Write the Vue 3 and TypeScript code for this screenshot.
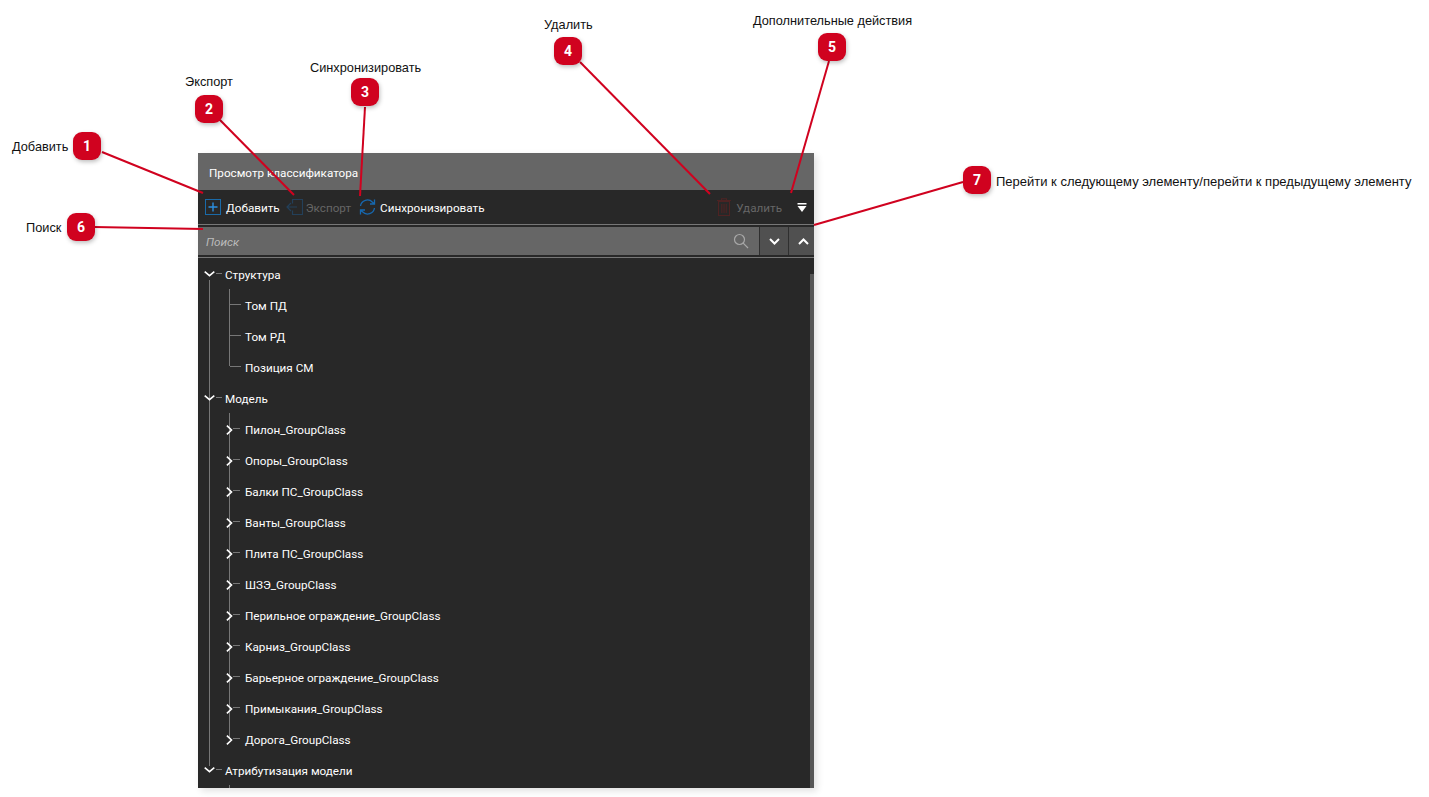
<script setup lang="ts">
interface Callout { n: number; x: number; y: number }
interface Row { label: string; level: number; kind: 'open' | 'closed' | 'leaf' }

const callouts: Callout[] = [
  { n: 1, x: 73, y: 132 },
  { n: 2, x: 195, y: 95 },
  { n: 3, x: 351, y: 78 },
  { n: 4, x: 554, y: 37 },
  { n: 5, x: 818, y: 33 },
  { n: 6, x: 67, y: 213 },
  { n: 7, x: 963, y: 166 },
]
const labels = [
  { t: 'Добавить', x: 12, y: 139, s: 12.75 },
  { t: 'Экспорт', x: 185, y: 74, s: 12.75 },
  { t: 'Синхронизировать', x: 310, y: 60, s: 12.75 },
  { t: 'Удалить', x: 544, y: 17, s: 12.75 },
  { t: 'Дополнительные действия', x: 753, y: 13, s: 12.75 },
  { t: 'Поиск', x: 26, y: 220, s: 12.75 },
  { t: 'Перейти к следующему элементу/перейти к предыдущему элементу', x: 996, y: 174, s: 13 },
]
const lines = [
  [102, 152, 203, 193],
  [220, 120, 294, 195],
  [365, 107, 360, 196],
  [580, 62, 710, 194],
  [829, 61, 791, 193],
  [94, 227, 203, 229],
  [963, 182, 814, 225],
]
const models = ['Пилон', 'Опоры', 'Балки ПС', 'Ванты', 'Плита ПС', 'ШЗЭ', 'Перильное ограждение', 'Карниз', 'Барьерное ограждение', 'Примыкания', 'Дорога']
const rows: Row[] = [
  { label: 'Структура', level: 0, kind: 'open' },
  { label: 'Том ПД', level: 1, kind: 'leaf' },
  { label: 'Том РД', level: 1, kind: 'leaf' },
  { label: 'Позиция СМ', level: 1, kind: 'leaf' },
  { label: 'Модель', level: 0, kind: 'open' },
  ...models.map((m): Row => ({ label: `${m}_GroupClass`, level: 1, kind: 'closed' })),
  { label: 'Атрибутизация модели', level: 0, kind: 'open' },
]
</script>

<template>
  <div class="page">
    <section class="panel">
      <header class="title">Просмотр классификатора</header>
      <div class="toolbar">
        <button class="tool">
          <svg width="17" height="17" viewBox="0 0 17 17" fill="none" stroke="#1a6aa8">
            <rect x="0.500" y="0.500" width="15" height="15" />
            <path d="M8 3.500v9M3.500 8h9" stroke="#2b8fe0" stroke-width="1.400" />
          </svg>
          <span>Добавить</span>
        </button>
        <button class="tool off export">
          <svg width="17" height="18" viewBox="0 0 17 18" fill="none" stroke="#23405a" stroke-width="1.200">
            <path d="M6.500 5.500V1.500h10v15h-10v-4" />
            <path d="M11 9H1M5 5L1 9l4 4" />
          </svg>
          <span>Экспорт</span>
        </button>
        <button class="tool sync">
          <svg width="17" height="18" viewBox="0 0 17 18" fill="none" stroke="#1668b0" stroke-width="1.300">
            <path d="M1.500 8a7 7 0 0 1 12-3.800L15.500 6M15.500 1.500V6H11" />
            <path d="M15.500 10a7 7 0 0 1-12 3.800L1.500 12M1.500 16.500V12H6" />
          </svg>
          <span>Синхронизировать</span>
        </button>
        <button class="tool off del">
          <svg width="14" height="18" viewBox="0 0 14 18" fill="none" stroke="#4e2323" stroke-width="1.100">
            <path d="M1.500 3.500h11v14h-11zM0 2.500h14M4.500 2.500V0.700h5v1.800M4.800 6v9M7 6v9M9.200 6v9" />
          </svg>
          <span>Удалить</span>
        </button>
        <svg class="more" width="10" height="9" viewBox="0 0 10 9">
          <path d="M0.500 0h9v1.500h-9z" fill="#fff" />
          <path d="M0.500 3h9L5 9z" fill="#fff" />
        </svg>
      </div>
      <div class="search">
        <span class="hint">Поиск</span>
        <svg class="lens" width="16" height="16" viewBox="0 0 16 16" fill="none" stroke="#a8a8a8" stroke-width="1.200">
          <circle cx="6.500" cy="6.500" r="5" />
          <path d="M10.200 10.200L15 15" />
        </svg>
        <button class="step">
          <svg width="11" height="7" viewBox="0 0 11 7" fill="none" stroke="#fff" stroke-width="2"><path d="M1 1l4.500 4.500L10 1" /></svg>
        </button>
        <button class="step up">
          <svg width="11" height="7" viewBox="0 0 11 7" fill="none" stroke="#fff" stroke-width="2"><path d="M1 6l4.500-4.500L10 6" /></svg>
        </button>
      </div>
      <div class="tree">
        <div class="thumb"></div>
        <i class="rail r0"></i>
        <i class="rail r1"></i>
        <i class="rail r2"></i>
        <i class="rail r3"></i>
        <div v-for="r in rows" :key="r.label" class="row" :class="`lv${r.level}`">
          <svg v-if="r.kind === 'open'" class="chev" width="11" height="6" viewBox="0 0 11 6" fill="none" stroke="#fff" stroke-width="1.600"><path d="M0.700 0.700L5.500 4.700l4.800-4" /></svg>
          <svg v-else-if="r.kind === 'closed'" class="chev" width="7" height="10" viewBox="0 0 7 10" fill="none" stroke="#fff" stroke-width="1.600"><path d="M0.900 0.600L5.500 5 0.900 9.400" /></svg>
          <i class="stub" :class="r.kind"></i>
          <span>{{ r.label }}</span>
        </div>
      </div>
    </section>

    <svg class="leaders" width="1429" height="797" viewBox="0 0 1429 797">
      <line v-for="(l, i) in lines" :key="i" :x1="l[0]" :y1="l[1]" :x2="l[2]" :y2="l[3]" />
    </svg>
    <span v-for="l in labels" :key="l.t" class="label" :style="{ left: l.x + 'px', top: l.y + 'px', fontSize: l.s + 'px' }">{{ l.t }}</span>
    <span v-for="c in callouts" :key="c.n" class="badge" :style="{ left: c.x + 'px', top: c.y + 'px' }">{{ c.n }}</span>
  </div>
</template>

<style>
html, body { margin: 0; background: #fff; }
</style>

<style scoped>
.page {
  position: relative;
  width: 1429px;
  height: 797px;
  padding: 153px 0 0 198px;
  box-sizing: border-box;
  overflow: hidden;
  background: #fff;
}
.panel {
  width: 616px;
  height: 635px;
  display: flex;
  flex-direction: column;
  background: #282828;
  box-shadow: 3px 3px 7px rgba(0, 0, 0, 0.12);
  font: 11.7px Roboto, sans-serif;
  color: #fff;
}
.title {
  height: 37px;
  flex: none;
  box-sizing: border-box;
  display: flex;
  align-items: center;
  padding: 2px 0 0 11px;
  background: #666;
}
.toolbar {
  height: 35px;
  flex: none;
  display: flex;
  align-items: center;
  padding: 0 7px 0 7px;
  box-sizing: border-box;
  border-bottom: 1px solid #777;
}
.tool {
  display: flex;
  align-items: center;
  gap: 4px;
  padding: 0;
  border: 0;
  background: none;
  color: #fff;
  font: inherit;
}
.tool span { padding-top: 2px; }
.tool.off { color: #666; }
.export { margin-left: 6px; gap: 3px; }
.sync { margin-left: 8px; }
.del { margin-left: auto; gap: 5px; }
.more { margin-left: 15px; }
.search {
  height: 28px;
  margin: 2px 0;
  flex: none;
  display: flex;
  align-items: center;
  padding-left: 8px;
  background: #666;
}
.hint { flex: 1; padding-top: 2px; color: #bbb; font-style: italic; }
.lens { margin-right: 10px; }
.step {
  width: 29px;
  height: 100%;
  flex: none;
  display: flex;
  align-items: center;
  justify-content: center;
  padding: 0;
  border: 0;
  border-left: 1px solid #2f2f2f;
  background: #505050;
}
.step.up { width: 26px; padding-left: 3px; }
.tree {
  position: relative;
  flex: 1;
  min-height: 0;
  overflow: hidden;
  border-top: 1px solid #777;
}
.thumb {
  position: absolute;
  right: 0;
  top: 16px;
  bottom: 0;
  width: 4px;
  background: #555;
}
.rail {
  position: absolute;
  width: 1px;
  background: #777;
}
.r0 { left: 11px; top: 22px; height: 486px; }
.r1 { left: 31px; top: 31px; height: 77px; }
.r2 { left: 31px; top: 155px; height: 325px; }
.r3 { left: 31px; top: 527px; height: 8px; }
.row {
  position: relative;
  height: 31px;
  box-sizing: border-box;
  padding-top: 3px;
  display: flex;
  align-items: center;
  white-space: nowrap;
}
.lv0 { padding-left: 27px; }
.lv1 { padding-left: 47px; }
.chev { position: absolute; top: 13px; }
.lv0 .chev { left: 6px; }
.lv1 .chev { left: 28px; top: 12px; }
.stub {
  position: absolute;
  top: 15px;
  height: 1px;
  background: #777;
}
.lv0 .stub { left: 18px; width: 6px; }
.lv1 .stub { left: 35px; width: 7px; }
.lv1 .stub.leaf { left: 32px; width: 11px; }
.leaders {
  position: absolute;
  left: 0;
  top: 0;
  pointer-events: none;
}
.leaders line {
  stroke: #d0021f;
  stroke-width: 2;
}
.label {
  position: absolute;
  font-family: "Liberation Sans", Arial, sans-serif;
  line-height: 15px;
  color: #111;
  white-space: nowrap;
}
.badge {
  position: absolute;
  width: 28px;
  height: 28px;
  display: flex;
  align-items: center;
  justify-content: center;
  border-radius: 9px;
  background: #d0021f;
  box-shadow: 1px 2px 4px rgba(0, 0, 0, 0.25);
  color: #fff;
  font: bold 14px Roboto, sans-serif;
}
</style>
